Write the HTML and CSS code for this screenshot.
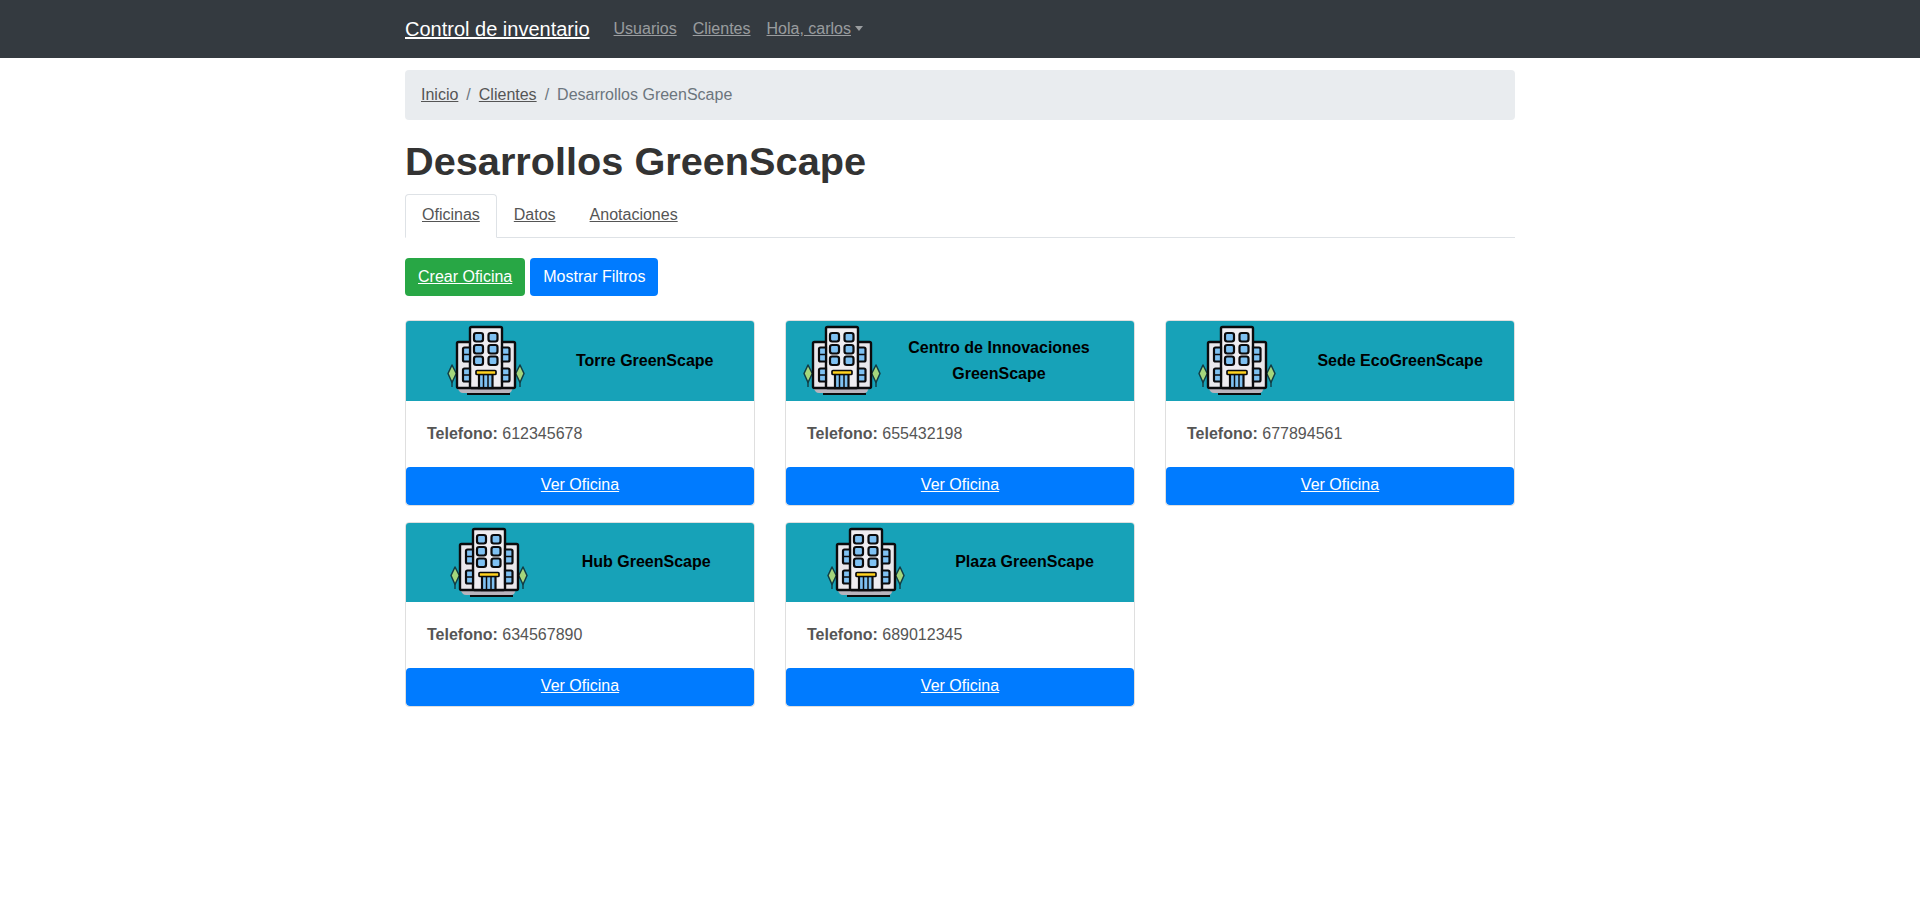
FILE: index.html
```html
<!DOCTYPE html>
<html lang="es">
<head>
<meta charset="utf-8">
<title>Desarrollos GreenScape</title>
<link rel="stylesheet" href="styles.css">
</head>
<body>
<svg class="sprite" aria-hidden="true">
  <symbol id="office" viewBox="0 0 80 80">
    <path d="M11 67 H67 L65 71 Q64 72 62 72 H17 Q15 72 14 71 Z" fill="#b9b4bd"/>
    <path d="M21 73 H64" stroke="#0b0b0d" stroke-width="1.800"/>
    <path d="M6 50 V66 M74 50 V66" stroke="#123c44" stroke-width="1.400"/>
    <g fill="#a4d67c" stroke="#123c44" stroke-width="1.500" stroke-linejoin="round">
      <path d="M6 44 L10.300 52.500 L6 61.500 L2 52.500 Z"/>
      <path d="M74 44 L78 52.500 L74 61.500 L69.700 52.500 Z"/>
    </g>
    <rect x="11" y="21" width="58" height="46" rx="1.500" fill="#e9e7eb" stroke="#0b0b0d" stroke-width="2.400"/>
    <rect x="24" y="6" width="32" height="61" rx="1.500" fill="#efedf1" stroke="#0b0b0d" stroke-width="2.400"/>
    <g fill="#7fc1f2" stroke="#0b0b0d" stroke-width="2.200">
      <rect x="28" y="12" width="9" height="8.500" rx="2.200"/><rect x="42.500" y="12" width="9" height="8.500" rx="2.200"/>
      <rect x="28" y="24" width="9" height="8.500" rx="2.200"/><rect x="42.500" y="24" width="9" height="8.500" rx="2.200"/>
      <rect x="28" y="35.500" width="9" height="8.500" rx="2.200"/><rect x="42.500" y="35.500" width="9" height="8.500" rx="2.200"/>
      <path d="M24 26.500 H18.500 Q17 26.500 17 28 V39 Q17 40.500 18.500 40.500 H24 Z"/>
      <path d="M56 26.500 H62 Q63.500 26.500 63.500 28 V39 Q63.500 40.500 62 40.500 H56 Z"/>
      <path d="M24 47.500 H18.500 Q17 47.500 17 49 V59 Q17 60.500 18.500 60.500 H24 Z"/>
      <path d="M56 47.500 H62 Q63.500 47.500 63.500 49 V59 Q63.500 60.500 62 60.500 H56 Z"/>
      <rect x="33" y="53" width="13.500" height="14"/>
    </g>
    <path d="M17 33.500 H24 M56 33.500 H64 M17 54 H24 M56 54 H64 M37.500 53 V67 M42 53 V67" stroke="#0b0b0d" stroke-width="1.500"/>
    <rect x="30" y="49.500" width="20" height="4" rx="1" fill="#ffd21f" stroke="#0b0b0d" stroke-width="1.700"/>
  </symbol>
</svg>
<nav class="navbar">
  <div class="container nav-inner">
    <a class="brand" href="#">Control de inventario</a>
    <a class="nav-link" href="#">Usuarios</a>
    <a class="nav-link" href="#">Clientes</a>
    <a class="nav-link caret" href="#">Hola, carlos</a>
  </div>
</nav>
<main class="container">
  <ol class="breadcrumb">
    <li><a href="#">Inicio</a></li>
    <li class="sep">/</li>
    <li><a href="#">Clientes</a></li>
    <li class="sep">/</li>
    <li class="current">Desarrollos GreenScape</li>
  </ol>
  <h1>Desarrollos GreenScape</h1>
  <ul class="tabs">
    <li class="tab active"><a href="#">Oficinas</a></li>
    <li class="tab"><a href="#">Datos</a></li>
    <li class="tab"><a href="#">Anotaciones</a></li>
  </ul>
  <div class="actions">
    <a class="btn btn-green" href="#">Crear Oficina</a>
    <button class="btn btn-blue" type="button">Mostrar Filtros</button>
  </div>
  <div class="cards">
    <article class="card">
      <header class="card-head"><svg class="office"><use href="#office"/></svg><h5>Torre GreenScape</h5></header>
      <p class="card-body"><b>Telefono:</b> 612345678</p>
      <a class="card-btn" href="#">Ver Oficina</a>
    </article>
    <article class="card">
      <header class="card-head"><svg class="office"><use href="#office"/></svg><h5 class="title-wrap">Centro de Innovaciones GreenScape</h5></header>
      <p class="card-body"><b>Telefono:</b> 655432198</p>
      <a class="card-btn" href="#">Ver Oficina</a>
    </article>
    <article class="card">
      <header class="card-head"><svg class="office"><use href="#office"/></svg><h5>Sede EcoGreenScape</h5></header>
      <p class="card-body"><b>Telefono:</b> 677894561</p>
      <a class="card-btn" href="#">Ver Oficina</a>
    </article>
    <article class="card">
      <header class="card-head"><svg class="office"><use href="#office"/></svg><h5>Hub GreenScape</h5></header>
      <p class="card-body"><b>Telefono:</b> 634567890</p>
      <a class="card-btn" href="#">Ver Oficina</a>
    </article>
    <article class="card">
      <header class="card-head"><svg class="office"><use href="#office"/></svg><h5>Plaza GreenScape</h5></header>
      <p class="card-body"><b>Telefono:</b> 689012345</p>
      <a class="card-btn" href="#">Ver Oficina</a>
    </article>
  </div>
</main>
</body>
</html>
```
FILE: styles.css
```css
* { box-sizing: border-box; }
html, body { margin: 0; padding: 0; }
body {
  font-family: "Liberation Sans", Arial, sans-serif;
  font-size: 16px;
  line-height: 24px;
  color: #555;
  background: #fff;
}
a { color: inherit; text-decoration: underline; }
.sprite { position: absolute; width: 0; height: 0; }
.container { width: 1110px; margin: 0 auto; }
.navbar { background: #343a40; height: 58px; }
.nav-inner { display: flex; align-items: center; height: 58px; }
.brand { color: #fff; font-size: 20px; line-height: 30px; margin-right: 16px; }
.nav-link { color: rgba(255,255,255,.5); padding: 0 8px; }
.caret::after {
  content: "";
  display: inline-block;
  margin-left: 4px;
  vertical-align: 3px;
  border-top: 5px solid;
  border-left: 4.800px solid transparent;
  border-right: 4.800px solid transparent;
}
.breadcrumb {
  display: flex;
  list-style: none;
  margin: 12px 0 0;
  padding: 13px 16px;
  height: 50px;
  background: #e9ecef;
  border-radius: 4px;
}
.sep { color: #6c757d; padding: 0 8px; }
.current { color: #6c757d; }
h1 {
  margin: 17px 0 9px;
  font-size: 39.700px;
  line-height: 48px;
  font-weight: 700;
  color: #333;
}
.tabs {
  display: flex;
  list-style: none;
  margin: 0;
  padding: 0;
  border-bottom: 1px solid #dee2e6;
  height: 44px;
}
.tab { padding: 8px 16px; border: 1px solid transparent; height: 44px; border-radius: 4px 4px 0 0; }
.tab.active { background: #fff; border-color: #dee2e6 #dee2e6 #fff; }
.actions { display: flex; gap: 5px; margin-top: 20px; }
.btn {
  font: inherit;
  height: 38px;
  padding: 6px 12px;
  border: 1px solid transparent;
  border-radius: 4px;
  color: #fff;
}
.btn-green { background: #28a745; }
.btn-blue { background: #007bff; }
.cards {
  display: grid;
  grid-template-columns: repeat(3, 350px);
  column-gap: 30px;
  row-gap: 16px;
  margin-top: 24.400px;
}
.card {
  display: flex;
  flex-direction: column;
  height: 185.500px;
  border: 1px solid #dfdfdf;
  border-radius: 4px;
  overflow: hidden;
}
.card-head {
  display: flex;
  align-items: center;
  justify-content: space-evenly;
  height: 79.600px;
  background: #17a2b8;
  color: #000;
}
.office { width: 80px; height: 80px; flex: none; }
h5 {
  margin: 0 0 .6px 9px;
  font-size: 16px;
  line-height: 26px;
  font-weight: 700;
  text-align: center;
}
.title-wrap { width: 184px; margin-right: 27px; }
.card-body { flex: 1; margin: 0; padding: 20.700px 21px 0; }
.card-btn {
  display: block;
  height: 38px;
  line-height: 36px;
  text-align: center;
  color: #fff;
  background: #007bff;
  border-radius: 4px;
}
```
